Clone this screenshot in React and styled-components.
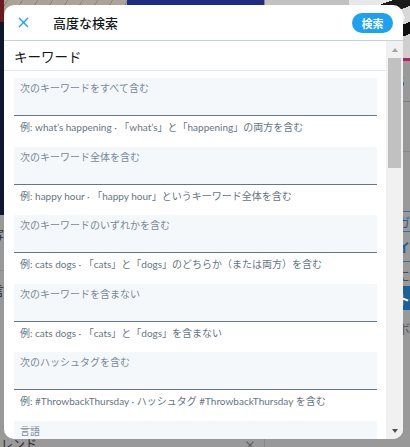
import React from 'react';
import styled, { createGlobalStyle } from 'styled-components';

const GlobalStyle = createGlobalStyle`
  html, body { margin: 0; padding: 0; }
  body {
    width: 410px;
    height: 447px;
    overflow: hidden;
    background: #999999;
    font-family: "Lato", "Noto Sans CJK JP", sans-serif;
  }
  * { box-sizing: border-box; }
`;

/* ---------- dimmed page behind the dialog ---------- */
const Screen = styled.div`
  position: relative;
  width: 410px;
  height: 447px;
  overflow: hidden;
  background: #999999;
`;

const Backdrop = styled.div`
  display: flex;
  height: 100%;
`;

const MainCol = styled.div`
  width: 271px;
  display: flex;
  flex-direction: column;
  border-right: 1px solid #878787;
`;

const Banner = styled.div`
  display: flex;
  height: 215px;
  flex: none;
`;

const SketchImage = styled.div`
  width: 127px;
  background:
    linear-gradient(180deg, #6c1a22 0 22px, #0e1630 22px) left top / 4px 100% no-repeat,
    repeating-linear-gradient(120deg, #a9a398 0 6px, #8f897c 6px 7px, #aaa498 7px 13px);
`;

const NavyImage = styled.div`
  flex: 1;
  background: #1e2c84;
`;

const MainList = styled.div`
  flex: 1;
  display: flex;
  flex-direction: column;
`;

const MainItem = styled.div`
  height: ${(p) => p.$h}px;
  flex: none;
  border-bottom: ${(p) => (p.$rule ? '1px solid #8c8c8c' : 'none')};
  font-family: "Noto Sans CJK JP", sans-serif;
  font-size: 12px;
  color: #2a2a2a;
  line-height: ${(p) => p.$h}px;
  text-indent: -8px;
  white-space: nowrap;
  overflow: hidden;
`;

const TrendHead = styled.div`
  margin-top: auto;
  height: 14px;
  flex: none;
  display: flex;
  align-items: flex-end;
  justify-content: space-between;
  padding: 0 8px 0 0;
  font-family: "Noto Sans CJK JP", sans-serif;
  font-size: 12px;
  color: #2b2b2b;
  line-height: 12px;
  overflow: hidden;
`;

const TrendTitle = styled.span`
  margin-left: -11px;
  transform: translateY(3px);
`;

const TrendClose = styled.span`
  color: #555;
  transform: translateY(4px);
`;

const SideCol = styled.div`
  flex: 1;
  display: flex;
  flex-direction: column;
`;

const SideBanner = styled.div`
  height: 58px;
  display: flex;
  flex: none;
`;

const GreyTile = styled.div`
  width: 84px;
  background: #c2c2c2;
`;

const PhotoTile = styled.div`
  flex: 1;
  background:
    radial-gradient(circle at 50px 18px, #f2f2f2 0 5px, transparent 6px),
    linear-gradient(160deg, #e8e8e8 0 20%, #1a1a1a 20% 35%, #d8d8d8 35% 55%, #101010 55% 70%, #cfcfcf 70%);
`;

const PinkRule = styled.div`
  height: 3px;
  flex: none;
  background: linear-gradient(90deg, #999 0 84px, #b8205f 84px);
`;

const SideItem = styled.div`
  height: ${(p) => p.$h}px;
  flex: none;
  padding-left: 132px;
  display: flex;
  align-items: center;
  border-bottom: ${(p) => (p.$rule ? `1px solid ${p.$rule}` : 'none')};
  background: ${(p) => p.$bg || 'transparent'};
  font-family: "Noto Sans CJK JP", sans-serif;
  font-size: 13px;
  font-weight: ${(p) => (p.$bold ? 700 : 400)};
  color: ${(p) => p.$color || '#1a1a1a'};
  white-space: nowrap;
  overflow: hidden;
`;

/* ---------- dialog ---------- */
const Modal = styled.div`
  position: absolute;
  left: 4px;
  top: 5px;
  width: 399px;
  height: 434px;
  background: #ffffff;
  border-radius: 10px;
  overflow: hidden;
  display: flex;
  flex-direction: column;
`;

const Header = styled.header`
  height: 36px;
  flex: none;
  display: flex;
  align-items: center;
  padding: 0 10px 0 9px;
  border-bottom: 1px solid #c4d2da;
`;

const CloseButton = styled.button`
  width: 20px;
  height: 20px;
  padding: 0;
  border: 0;
  background: transparent;
  display: flex;
  align-items: center;
  justify-content: center;
  cursor: pointer;
`;

const Title = styled.h1`
  margin: 0 0 0 20px;
  flex: 1;
  font-family: "Noto Sans CJK JP", sans-serif;
  font-size: 13px;
  font-weight: 500;
  color: #14171a;
  line-height: 16px;
`;

const SearchButton = styled.button`
  width: 41px;
  height: 20px;
  border: 0;
  border-radius: 10px;
  background: #1da1f2;
  color: #ffffff;
  font-family: "Noto Sans CJK JP", sans-serif;
  font-size: 11px;
  font-weight: 700;
  padding: 0;
  line-height: 20px;
`;

const Body = styled.div`
  flex: 1;
  min-height: 0;
  display: flex;
`;

const Content = styled.div`
  flex: 1;
  min-width: 0;
  overflow: hidden;
`;

const SectionTitle = styled.h2`
  margin: 0;
  height: 30px;
  padding: 0 0 0 10px;
  display: flex;
  align-items: center;
  border-bottom: 1px solid #e1e8ed;
  font-family: "Noto Sans CJK JP", sans-serif;
  font-size: 13.5px;
  font-weight: 400;
  color: #14171a;
`;

const Fields = styled.div`
  padding: 7px 9px 0 10px;
`;

const Field = styled.div`
  margin-bottom: 12.5px;
`;

const InputBox = styled.div`
  height: 38px;
  padding: 3px 6px 0;
  background: #f5f8fa;
  border-bottom: ${(p) => (p.$plain ? 'none' : '1px solid #657786')};
`;

const Label = styled.div`
  font-family: "Lato", "Noto Sans CJK JP", sans-serif;
  font-size: 10px;
  line-height: 14px;
  color: #7a8996;
`;

const Hint = styled.div`
  padding: 4px 6px 0;
  font-family: "Lato", "Noto Sans CJK JP", sans-serif;
  font-size: 10px;
  line-height: 14px;
  color: #66757f;
  white-space: nowrap;
`;

/* ---------- scrollbar drawing ---------- */
const ScrollBar = styled.div`
  width: 17px;
  flex: none;
  background: #f1f1f1;
  display: flex;
  flex-direction: column;
`;

const ArrowButton = styled.div`
  height: 17px;
  flex: none;
  display: flex;
  align-items: center;
  justify-content: center;
`;

const Arrow = styled.div`
  width: 0;
  height: 0;
  border-left: 3.5px solid transparent;
  border-right: 3.5px solid transparent;
  ${(p) =>
    p.$down
      ? `border-top: 4px solid #505050;`
      : `border-bottom: 4px solid #a3a3a3;`}
`;

const Track = styled.div`
  flex: 1;
  padding: 0 2px;
`;

const Thumb = styled.div`
  height: 110px;
  background: #c1c1c1;
`;

const fields = [
  {
    label: '次のキーワードをすべて含む',
    hint: '例: what’s happening · 「what’s」と「happening」の両方を含む',
  },
  {
    label: '次のキーワード全体を含む',
    hint: '例: happy hour · 「happy hour」というキーワード全体を含む',
  },
  {
    label: '次のキーワードのいずれかを含む',
    hint: '例: cats dogs · 「cats」と「dogs」のどちらか（または両方）を含む',
  },
  {
    label: '次のキーワードを含まない',
    hint: '例: cats dogs · 「cats」と「dogs」を含まない',
  },
  {
    label: '次のハッシュタグを含む',
    hint: '例: #ThrowbackThursday · ハッシュタグ #ThrowbackThursday を含む',
  },
];

export default function App() {
  return (
    <>
      <GlobalStyle />
      <Screen>
        <Backdrop>
          <MainCol>
            <Banner>
              <SketchImage />
              <NavyImage />
            </Banner>
            <MainList>
              <MainItem $h={40}>写真撮影</MainItem>
              <MainItem $h={16} $rule />
              <MainItem $h={40}>言葉</MainItem>
            </MainList>
            <TrendHead>
              <TrendTitle>トレンド</TrendTitle>
              <TrendClose>×</TrendClose>
            </TrendHead>
          </MainCol>
          <SideCol>
            <SideBanner>
              <GreyTile />
              <PhotoTile />
            </SideBanner>
            <PinkRule />
            <SideItem $h={41} $rule="#7d7d7d">5</SideItem>
            <SideItem $h={50} $rule="#8a8a8a" />
            <SideItem $h={60} $rule="#3d6b93" />
            <SideItem $h={20} $color="#1b5d93" $rule="#3d6b93">ガ</SideItem>
            <SideItem $h={30} $color="#1b5d93" $bold $rule="#3d6b93">イ</SideItem>
            <SideItem $h={24} $color="#4a4a4a">に</SideItem>
            <SideItem $h={24} $bg="#1b6097" $color="#ffffff" $bold>ト</SideItem>
            <SideItem $h={36} $color="#5a5a5a">ボ</SideItem>
          </SideCol>
        </Backdrop>

        <Modal>
          <Header>
            <CloseButton aria-label="閉じる">
              <svg width="11" height="11" viewBox="0 0 11 11">
                <path d="M1 1 L10 10 M10 1 L1 10" stroke="#1da1f2" strokeWidth="1.4" fill="none" />
              </svg>
            </CloseButton>
            <Title>高度な検索</Title>
            <SearchButton>検索</SearchButton>
          </Header>
          <Body>
            <Content>
              <SectionTitle>キーワード</SectionTitle>
              <Fields>
                {fields.map((f) => (
                  <Field key={f.label}>
                    <InputBox>
                      <Label>{f.label}</Label>
                    </InputBox>
                    <Hint>{f.hint}</Hint>
                  </Field>
                ))}
                <Field>
                  <InputBox $plain>
                    <Label>言語</Label>
                  </InputBox>
                </Field>
              </Fields>
            </Content>
            <ScrollBar>
              <ArrowButton>
                <Arrow />
              </ArrowButton>
              <Track>
                <Thumb />
              </Track>
              <ArrowButton>
                <Arrow $down />
              </ArrowButton>
            </ScrollBar>
          </Body>
        </Modal>
      </Screen>
    </>
  );
}
